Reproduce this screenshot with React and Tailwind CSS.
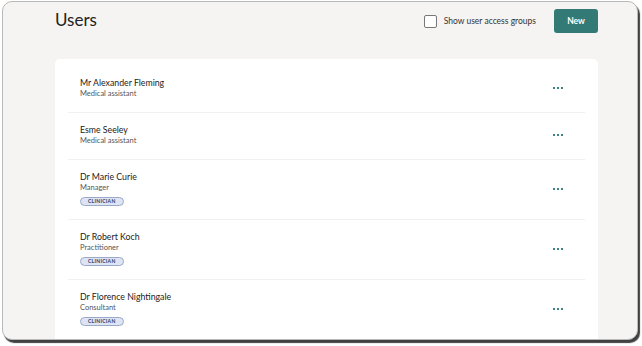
import React from 'react';

const users = [
  { name: 'Mr Alexander Fleming', role: 'Medical assistant' },
  { name: 'Esme Seeley', role: 'Medical assistant' },
  { name: 'Dr Marie Curie', role: 'Manager', clinician: true },
  { name: 'Dr Robert Koch', role: 'Practitioner', clinician: true },
  { name: 'Dr Florence Nightingale', role: 'Consultant', clinician: true },
];

function Dots() {
  return (
    <div className="flex gap-[2px]">
      <span className="w-[2px] h-[2px] bg-[#3b8583]" />
      <span className="w-[2px] h-[2px] bg-[#3b8583]" />
      <span className="w-[2px] h-[2px] bg-[#3b8583]" />
    </div>
  );
}

function UserRow({ user, last }) {
  return (
    <div
      className={
        last
          ? 'flex items-center justify-between pl-3 pr-[22px] pt-[11px] pb-[13px]'
          : 'flex items-center justify-between pl-3 pr-[22px] pt-[11px] pb-[13px] border-b border-[#f1f0ee]'
      }
    >
      <div className="flex flex-col">
        <div className="text-[8.75px] leading-[12px] text-[#222]">{user.name}</div>
        <div className="text-[7.5px] leading-[10px] text-[#555]">{user.role}</div>
        {user.clinician && (
          <div className="mt-[4px] flex">
            <span className="h-[9px] px-[7px] rounded-full bg-[#dde5f5] border border-[#9aa8c9] text-[5px] leading-[7px] font-bold tracking-[0.3px] text-[#2c3a66]">
              CLINICIAN
            </span>
          </div>
        )}
      </div>
      <Dots />
    </div>
  );
}

function App() {
  return (
    <div className="w-[642px] h-[346px] bg-white pt-[1px] pl-[2px] font-['Lato',sans-serif]">
      <div className="w-[636px] h-[339px] rounded-[10px] bg-[#f5f4f2] border border-[#b9b9b9] shadow-[2px_3px_1px_rgba(0,0,0,0.75)] overflow-hidden flex flex-col pl-[52px] pr-[39px]">
        {/* header */}
        <div className="flex items-start justify-between pt-[6px]">
          <h1 className="text-[17px] leading-[24px] text-[#222]">Users</h1>
          <div className="flex items-center gap-[18px] pt-[1px]">
            <label className="flex items-center gap-[7px]">
              <span className="w-[13px] h-[13px] rounded-[2px] border border-[#777] bg-white" />
              <span className="text-[8.5px] text-[#333]">Show user access groups</span>
            </label>
            <button className="w-[44px] h-[24px] rounded-[3px] bg-[#337a76] text-white text-[8.5px] font-bold">
              New
            </button>
          </div>
        </div>
        {/* list */}
        <div className="mt-[26px] bg-white rounded-t-[5px] pt-[7px] px-[13px] flex-1">
          {users.map((u, i) => (
            <UserRow key={u.name} user={u} last={i === users.length - 1} />
          ))}
        </div>
      </div>
    </div>
  );
}

export default App;
